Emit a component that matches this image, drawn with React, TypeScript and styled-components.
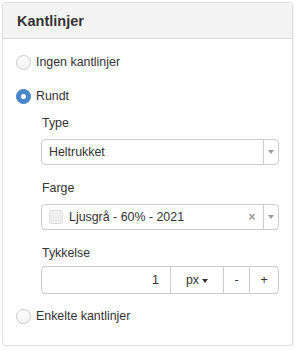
import React from "react";
import styled, { createGlobalStyle } from "styled-components";

const Global = createGlobalStyle`
  html, body { margin: 0; padding: 0; background: #fff; }
  body { font-family: "Liberation Sans", Arial, sans-serif; color: #333; }
  * { box-sizing: border-box; }
`;

const Page = styled.div`
  padding: 2px 0 0 2px;
`;

const Panel = styled.div`
  width: 291px;
  height: 344px;
  border: 1px solid #ddd;
  border-radius: 4px;
  background: #fff;
  box-shadow: 1px 1px 1px rgba(0, 0, 0, 0.06);
  display: flex;
  flex-direction: column;
  overflow: hidden;
`;

const Header = styled.div`
  height: 36px;
  flex: none;
  background: #f4f4f4;
  border-bottom: 1px solid #ddd;
  display: flex;
  align-items: center;
  padding: 0 14px;
  font-size: 14.5px;
  font-weight: bold;
  color: #333;
`;

const Body = styled.div`
  display: flex;
  flex-direction: column;
  padding: 13px 13px 0 13px;
`;

const RadioRow = styled.label<{ $mt?: number }>`
  display: flex;
  align-items: center;
  height: 20px;
  gap: 5px;
  margin-top: ${(p) => p.$mt ?? 0}px;
  font-size: 12.4px;
  color: #333;
`;

const RadioDot = styled.span<{ $checked?: boolean }>`
  width: 15px;
  height: 15px;
  border-radius: 50%;
  flex: none;
  border: 1px solid ${(p) => (p.$checked ? "#3f7fc4" : "#c9c9c9")};
  background: ${(p) =>
    p.$checked ? "#4a88cc" : "linear-gradient(#fff, #f3f3f3)"};
  display: flex;
  align-items: center;
  justify-content: center;
  &::after {
    content: "";
    display: ${(p) => (p.$checked ? "block" : "none")};
    width: 5px;
    height: 5px;
    border-radius: 50%;
    background: #fff;
  }
`;

const Nested = styled.div`
  display: flex;
  flex-direction: column;
  padding-left: 25px;
`;

const Label = styled.div<{ $mt: number; $mb?: number }>`
  font-size: 12.4px;
  line-height: 16px;
  height: 16px;
  margin-top: ${(p) => p.$mt}px;
  margin-bottom: ${(p) => p.$mb ?? 8}px;
  padding-left: 1px;
`;

const Select = styled.div`
  height: 26px;
  width: 238px;
  border: 1px solid #ccc;
  border-radius: 4px;
  background: #fff;
  display: flex;
  align-items: stretch;
  font-size: 12.4px;
`;

const SelectValue = styled.div`
  flex: 1;
  display: flex;
  align-items: center;
  padding-left: 7px;
  gap: 6px;
  color: #333;
`;

const Clear = styled.div`
  width: 22px;
  display: flex;
  align-items: center;
  justify-content: center;
  color: #999;
  font-size: 12px;
  font-weight: bold;
`;

const Arrow = styled.div`
  width: 15px;
  border-left: 1px solid #ccc;
  display: flex;
  align-items: center;
  justify-content: center;
  &::after {
    content: "";
    border-left: 3px solid transparent;
    border-right: 3px solid transparent;
    border-top: 4px solid #999;
  }
`;

const Swatch = styled.span`
  width: 14px;
  height: 14px;
  border: 1px solid #e2e2e2;
  border-radius: 2px;
  background: #eeeeee;
  flex: none;
`;

const Group = styled.div`
  height: 28px;
  width: 238px;
  border: 1px solid #ccc;
  border-radius: 4px;
  display: flex;
  font-size: 12.4px;
`;

const NumInput = styled.div`
  flex: 1;
  display: flex;
  align-items: center;
  justify-content: flex-end;
  padding-right: 11px;
`;

const Seg = styled.div<{ $w: number }>`
  width: ${(p) => p.$w}px;
  border-left: 1px solid #ccc;
  display: flex;
  align-items: center;
  justify-content: center;
  gap: 3px;
  color: #333;
`;

const Caret = styled.span`
  border-left: 3.5px solid transparent;
  border-right: 3.5px solid transparent;
  border-top: 4px solid #333;
  margin-top: 1px;
`;

export default function App() {
  return (
    <Page>
      <Global />
      <Panel>
        <Header>Kantlinjer</Header>
        <Body>
          <RadioRow>
            <RadioDot />
            Ingen kantlinjer
          </RadioRow>
          <RadioRow $mt={14}>
            <RadioDot $checked />
            Rundt
          </RadioRow>
          <Nested>
            <Label $mt={9}>Type</Label>
            <Select>
              <SelectValue>Heltrukket</SelectValue>
              <Arrow />
            </Select>
            <Label $mt={15}>Farge</Label>
            <Select>
              <SelectValue>
                <Swatch />
                Ljusgrå - 60% - 2021
              </SelectValue>
              <Clear>×</Clear>
              <Arrow />
            </Select>
            <Label $mt={15} $mb={5}>
              Tykkelse
            </Label>
            <Group>
              <NumInput>1</NumInput>
              <Seg $w={53}>
                px <Caret />
              </Seg>
              <Seg $w={26}>-</Seg>
              <Seg $w={29}>+</Seg>
            </Group>
          </Nested>
          <RadioRow $mt={12}>
            <RadioDot />
            Enkelte kantlinjer
          </RadioRow>
        </Body>
      </Panel>
    </Page>
  );
}
